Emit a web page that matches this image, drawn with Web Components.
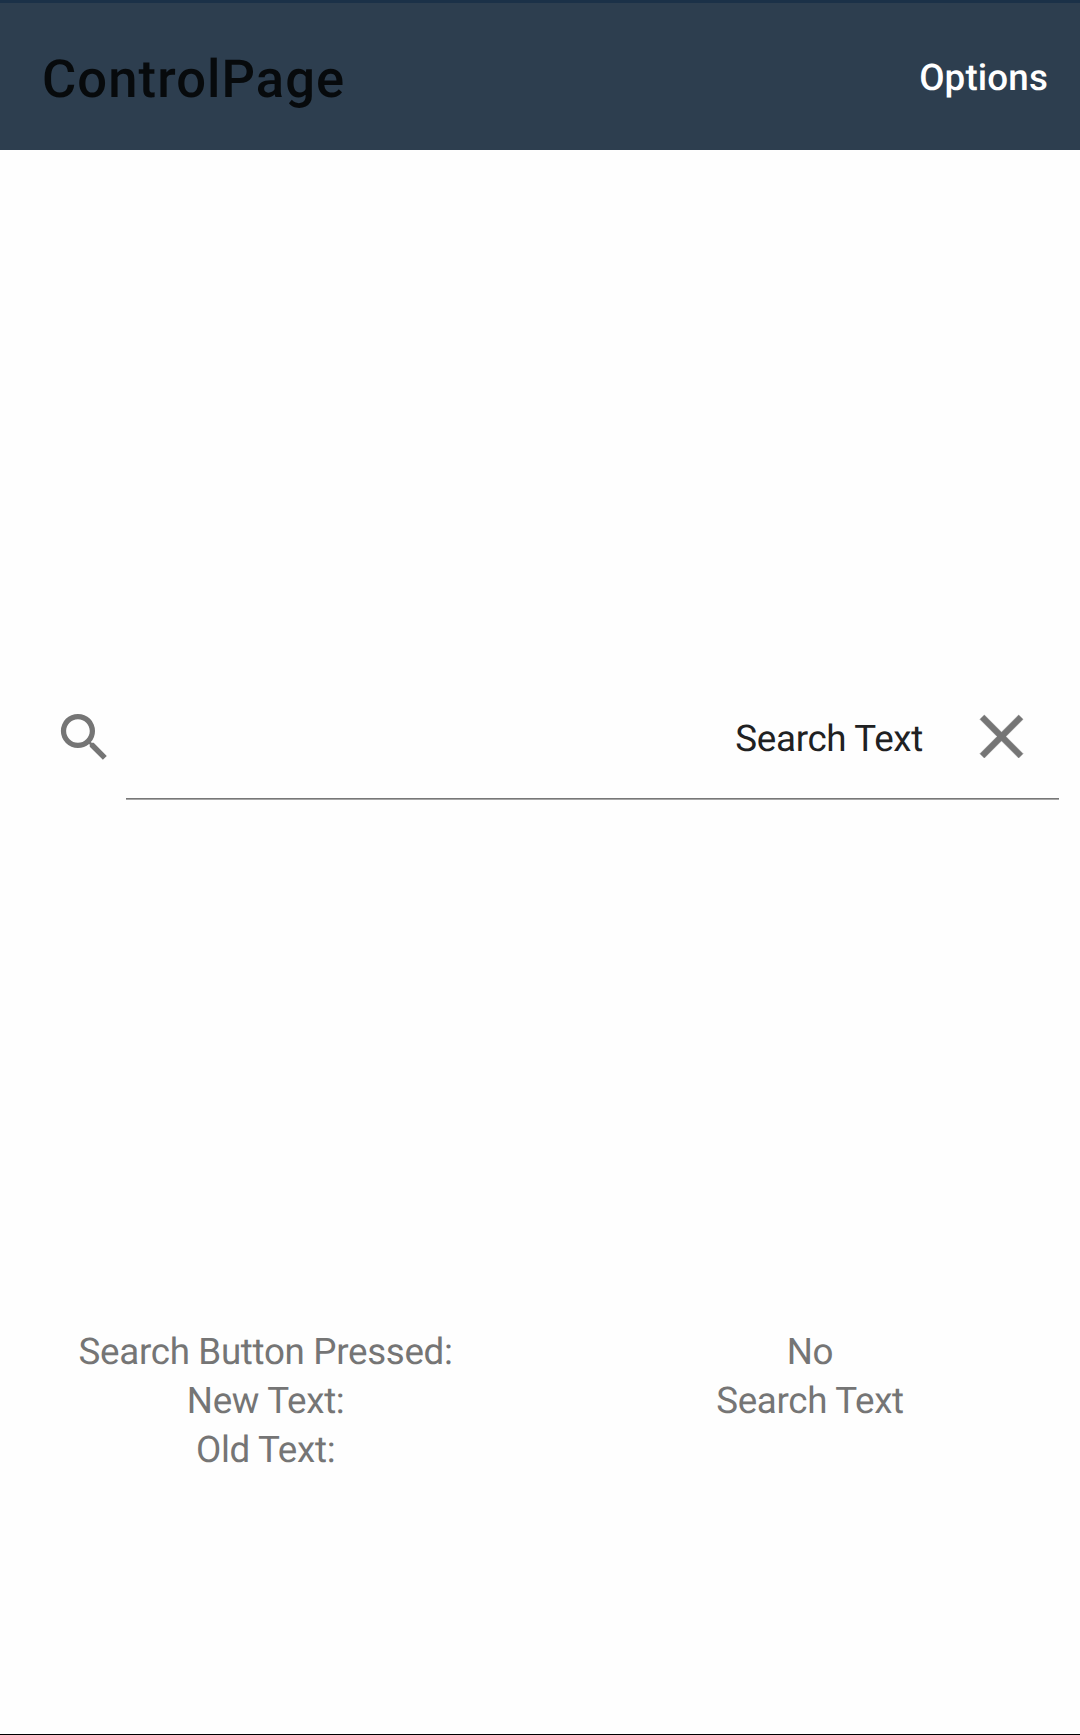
<!DOCTYPE html>
<html lang="en">
<head>
<meta charset="utf-8">
<title>ControlPage</title>
<style>
html, body { margin: 0; height: 100%; }
body { font-family: Roboto, "Liberation Sans", sans-serif; font-size: 36.75px; letter-spacing: -0.32px; background: #fefefe; overflow: hidden; text-rendering: geometricPrecision; }
</style>
</head>
<body>
<control-page>
  <nav-bar slot="header"><span slot="title">ControlPage</span><span slot="action">Options</span></nav-bar>
  <search-field>Search Text</search-field>
  <status-grid slot="footer">
    <status-row label="Search Button Pressed: ">No</status-row>
    <status-row label="New Text: ">Search Text</status-row>
    <status-row label="Old Text: "></status-row>
  </status-grid>
</control-page>
<script>
class ShadowElement extends HTMLElement {
  connectedCallback() {
    if (this.shadowRoot) return;
    this.attachShadow({ mode: 'open' }).innerHTML = this.constructor.markup;
    this.ready();
  }
  ready() {}
}

customElements.define('control-page', class extends ShadowElement {
  static markup = `<style>
    :host { display: flex; flex-direction: column; height: 1735px; box-sizing: border-box; border-bottom: 1px solid #000; }
    main { flex: none; height: 498px; padding-top: 527px; }
  </style>
  <slot name="header"></slot><main><slot></slot></main><slot name="footer"></slot>`;
});

customElements.define('nav-bar', class extends ShadowElement {
  static markup = `<style>
    :host { display: flex; align-items: center; justify-content: space-between; height: 150px; box-sizing: border-box; border-top: 3px solid #1b3148; padding: 5px 32px 0 42px; background: #2d3e4f; font-weight: 500; }
    h1 { margin: 0; font: inherit; font-size: 52.5px; line-height: 62px; color: #070a0c; letter-spacing: 1.1px; }
    button { all: unset; color: #fff; line-height: 44px; margin-top: -3px; letter-spacing: 0.15px; }
  </style>
  <h1><slot name="title"></slot></h1><button><slot name="action"></slot></button>`;
});

customElements.define('search-field', class extends ShadowElement {
  static markup = `<style>
    :host { display: flex; box-sizing: border-box; height: 123px; padding: 0 21px 0 53px; }
    .search { width: 63px; height: 63px; margin: 29px 10px 0 0; flex: none; }
    .entry { flex: 1; display: flex; justify-content: flex-end; height: 121px; border-bottom: 1px solid #777; box-shadow: 0 1px #a6a6a6; color: #202122; }
    .text { margin: 40px 56.5px 0 0; line-height: 44px; }
    .clear { width: 43px; height: 43px; margin: 38px 36.5px 0 0; flex: none; overflow: visible; stroke: #757575; stroke-width: .16; }
    svg { fill: #757575; display: block; }
  </style>
  <svg class="search" viewBox="0 0 24 24"><path d="M15.5 14h-.79l-.28-.27A6.471 6.471 0 0 0 16 9.5 6.5 6.5 0 1 0 9.5 16c1.61 0 3.09-.59 4.23-1.57l.27.28v.79l5 4.99L20.49 19l-4.99-5zm-6 0C7.01 14 5 11.99 5 9.5S7.01 5 9.5 5 14 7.01 14 9.5 11.99 14 9.5 14z"/></svg>
  <div class="entry"><span class="text"><slot></slot></span>
  <svg class="clear" viewBox="5 5 14 14"><path d="M19 6.41 17.59 5 12 10.59 6.41 5 5 6.41 10.59 12 5 17.59 6.41 19 12 13.41 17.59 19 19 17.59 13.41 12z"/></svg></div>`;
});

customElements.define('status-grid', class extends ShadowElement {
  static markup = `<style>
    :host { display: flex; flex-direction: column; margin-top: 152px; color: #757575; line-height: 49px; }
  </style><slot></slot>`;
});

customElements.define('status-row', class extends ShadowElement {
  static markup = `<style>
    :host { display: grid; grid-template-columns: 1fr 1fr; min-height: 49px; text-align: center; }
    .label { white-space: pre; }
  </style><span class="label"></span><span><slot></slot></span>`;
  ready() { this.shadowRoot.querySelector('.label').textContent = this.getAttribute('label'); }
});
</script>
</body>
</html>
